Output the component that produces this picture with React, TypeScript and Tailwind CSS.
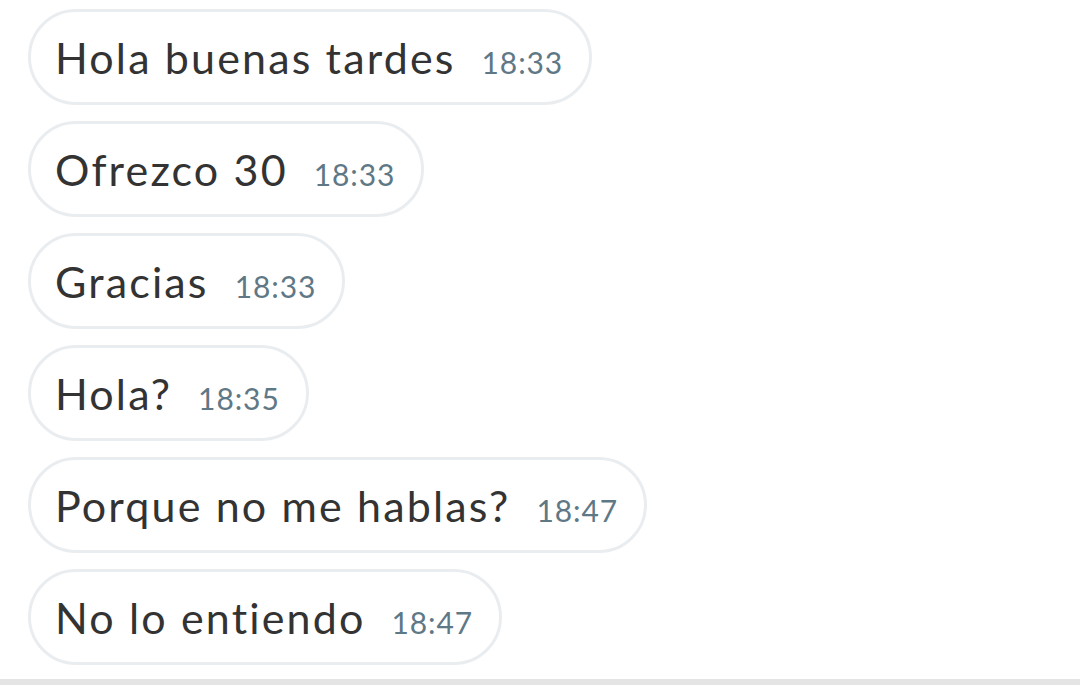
import React from "react";

const msgs: [string, string][] = [
  ["Hola buenas tardes", "18:33"],
  ["Ofrezco 30", "18:33"],
  ["Gracias", "18:33"],
  ["Hola?", "18:35"],
  ["Porque no me hablas?", "18:47"],
  ["No lo entiendo", "18:47"],
];

export default function App() {
  return (
    <div className="w-[1080px] h-[685px] bg-white flex flex-col overflow-hidden" style={{ fontFamily: "Lato, 'Noto Sans', sans-serif", fontVariantLigatures: "none" }}>
      <div className="flex flex-col items-start gap-[16px] pl-[28px] pt-[9px]">
        {msgs.map(([t, time], i) => (
          <div
            key={i}
            className="h-[96px] flex items-center rounded-full border-[3px] border-[#eaedf0] pl-[24px] pr-[26px]"
          >
            <div className="flex items-baseline leading-none">
              <span className="text-[43px] tracking-[0.05em] text-[#333333]">{t}</span>
              <span className="ml-[26px] text-[30px] tracking-[0.03em] text-[#5f7886]">{time}</span>
            </div>
          </div>
        ))}
      </div>
      <div className="mt-[14px] h-[6px] bg-[#e4e4e4]" />
    </div>
  );
}
